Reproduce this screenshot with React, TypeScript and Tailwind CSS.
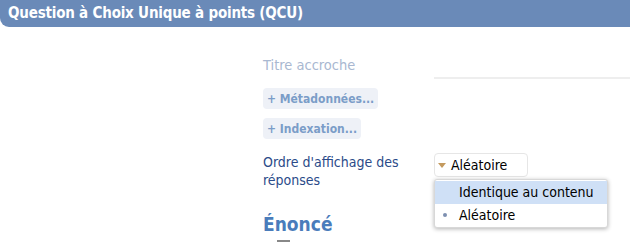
import React from 'react';

const FONT = "font-['DejaVu_Sans_Condensed','DejaVu_Sans',sans-serif]";

const App: React.FC = () => {
  return (
    <div className={`w-[630px] h-[243px] overflow-hidden bg-white ${FONT}`}>
      {/* Header bar */}
      <div className="h-[27px] bg-[#6a8ab8] rounded-bl-[9px] flex items-center pl-[8px]">
        <span className="text-white font-bold text-[15px] tracking-[-0.2px]">Question à Choix Unique à points (QCU)</span>
      </div>

      <div className="pl-[263px] pt-[29px]">
        {/* Titre accroche */}
        <div className="flex items-end h-[22px]">
          <span className="w-[171px] text-[14.5px] text-[#a9b8d1] leading-[18px] pb-[4px]">Titre accroche</span>
          <div className="flex-1 h-[2px] bg-[#eeeeee] mb-[-1px]"></div>
        </div>

        {/* Buttons */}
        <div className="mt-[10px] flex flex-col items-start gap-[9px]">
          <button className="h-[21px] px-[4px] rounded-[4px] bg-[#eef1f7] text-[#7b9dc8] font-bold text-[12px] leading-none">+ Métadonnées...</button>
          <button className="h-[21px] px-[4px] rounded-[4px] bg-[#eef1f7] text-[#7b9dc8] font-bold text-[12px] leading-none">+ Indexation...</button>
        </div>

        {/* Ordre d'affichage */}
        <div className="mt-[14px] flex items-start">
          <div className="w-[171px] text-[14px] leading-[18px] text-[#2b4b89]">
            Ordre d'affichage des<br />réponses
          </div>
          <div className="relative">
            <div className="h-[24px] w-[94px] border border-[#e6e6e6] rounded-[4px] bg-white flex items-center pl-[3px] gap-[5px] text-[14px] text-black">
              <svg width="8" height="5" viewBox="0 0 8 5"><path d="M0 0 H8 L4 5 Z" fill="#c49a5e" /></svg>
              <span>Aléatoire</span>
            </div>
            {/* Open menu */}
            <div className="absolute left-0 top-[26px] w-[174px] bg-white rounded-[3px] border border-[#d8d8d8] shadow-[0_1px_4px_rgba(0,0,0,0.3)] py-[1px] text-[14px] text-black z-10">
              <div className="h-[23px] bg-[#cfe0f6] flex items-center pl-[24px]">Identique au contenu</div>
              <div className="h-[22px] flex items-center pl-[8px]">
                <span className="w-[4px] h-[4px] rounded-full bg-[#7d8fb0] mr-[12px]"></span>
                Aléatoire
              </div>
            </div>
          </div>
        </div>

        {/* Énoncé */}
        <div className="mt-[24px] text-[19px] font-bold text-[#4a7cbb] leading-[22px]">Énoncé</div>
        <div className="ml-[14px] mt-[5px] w-[13px] h-[2px] bg-[#888888]"></div>
      </div>
    </div>
  );
};

export default App;
